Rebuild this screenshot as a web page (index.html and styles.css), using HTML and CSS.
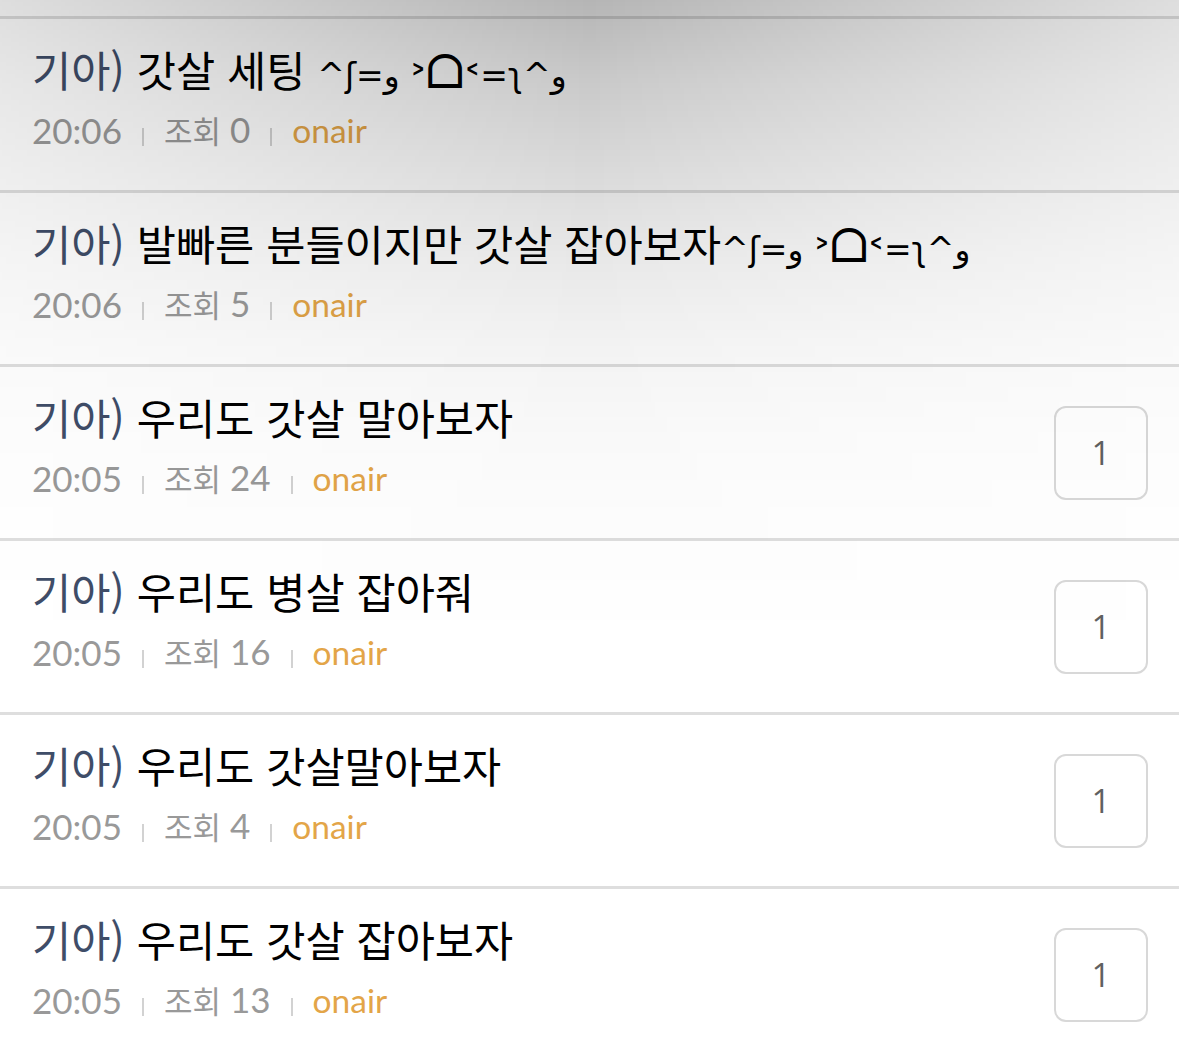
FILE: index.html
```html
<!DOCTYPE html>
<html lang="ko">
<head>
<meta charset="utf-8">
<title>게시판</title>
<link rel="stylesheet" href="styles.css">
</head>
<body>
<div class="shade"></div>
<ul class="list">
  <li class="row">
    <div class="body">
      <div class="title"><span class="tag">기아)</span> 갓살 세팅 <span class="emo">^ʃ=و <span class="arr">˃</span><span class="face">ᗝ</span><span class="arr">˂</span>=ʅ^و</span></div>
      <div class="meta"><span>20:06</span><i class="sep"></i><span><span class="lbl">조회</span> 0</span><i class="sep"></i><span class="nick">onair</span></div>
    </div>
  </li>
  <li class="row">
    <div class="body">
      <div class="title"><span class="tag">기아)</span> 발빠른 분들이지만 갓살 잡아보자<span class="emo">^ʃ=و <span class="arr">˃</span><span class="face">ᗝ</span><span class="arr">˂</span>=ʅ^و</span></div>
      <div class="meta"><span>20:06</span><i class="sep"></i><span><span class="lbl">조회</span> 5</span><i class="sep"></i><span class="nick">onair</span></div>
    </div>
  </li>
  <li class="row">
    <div class="body">
      <div class="title"><span class="tag">기아)</span> 우리도 갓살 말아보자</div>
      <div class="meta"><span>20:05</span><i class="sep"></i><span><span class="lbl">조회</span> 24</span><i class="sep"></i><span class="nick">onair</span></div>
    </div>
    <div class="count">1</div>
  </li>
  <li class="row">
    <div class="body">
      <div class="title"><span class="tag">기아)</span> 우리도 병살 잡아줘</div>
      <div class="meta"><span>20:05</span><i class="sep"></i><span><span class="lbl">조회</span> 16</span><i class="sep"></i><span class="nick">onair</span></div>
    </div>
    <div class="count">1</div>
  </li>
  <li class="row">
    <div class="body">
      <div class="title"><span class="tag">기아)</span> 우리도 갓살말아보자</div>
      <div class="meta"><span>20:05</span><i class="sep"></i><span><span class="lbl">조회</span> 4</span><i class="sep"></i><span class="nick">onair</span></div>
    </div>
    <div class="count">1</div>
  </li>
  <li class="row">
    <div class="body">
      <div class="title"><span class="tag">기아)</span> 우리도 갓살 잡아보자</div>
      <div class="meta"><span>20:05</span><i class="sep"></i><span><span class="lbl">조회</span> 13</span><i class="sep"></i><span class="nick">onair</span></div>
    </div>
    <div class="count">1</div>
  </li>
</ul>
</body>
</html>
```
FILE: styles.css
```css
html, body {
  margin: 0;
  padding: 0;
  background: #fff;
}
body {
  font-family: Lato, "Noto Sans CJK KR", "DejaVu Sans", sans-serif;
  color: #000;
  overflow: hidden;
}
.shade {
  position: fixed;
  inset: 0;
  pointer-events: none;
  z-index: 5;
  background: linear-gradient(to bottom,
    rgba(0,0,0,0.29) 0px,
    rgba(0,0,0,0.21) 80px,
    rgba(0,0,0,0.15) 170px,
    rgba(0,0,0,0.09) 260px,
    rgba(0,0,0,0.048) 350px,
    rgba(0,0,0,0.022) 440px,
    rgba(0,0,0,0.01) 520px,
    rgba(0,0,0,0) 640px);
  -webkit-mask-image: linear-gradient(to right, rgba(0,0,0,0.45), #000 50%, rgba(0,0,0,0.45));
  mask-image: linear-gradient(to right, rgba(0,0,0,0.45), #000 50%, rgba(0,0,0,0.45));
}
.list {
  list-style: none;
  margin: 0;
  padding: 16px 0 0;
}
.row {
  display: flex;
  align-items: center;
  border-top: 3px solid #dedede;
  height: 171px;
  padding: 0 31px 0 32px;
}
.body {
  flex: 1;
  min-width: 0;
  padding-bottom: 14px;
}
.title {
  font-family: "Noto Sans CJK KR", "DejaVu Sans", sans-serif;
  font-size: 42.6px;
  line-height: 52px;
  height: 52px;
  white-space: nowrap;
}
.tag {
  color: #3f4d68;
}
.emo {
  font-family: "DejaVu Sans", sans-serif;
  font-size: 33px;
  line-height: 0;
}
.arr {
  font-size: 40px;
  vertical-align: -10px;
  margin: 0 -2px;
}
.face {
  font-size: 46px;
  vertical-align: -1px;
}
.meta {
  margin-top: 12px;
  font-size: 35px;
  line-height: 44px;
  color: #999;
  display: flex;
  align-items: center;
}
.lbl {
  font-size: 31px;
}
.sep {
  display: inline-block;
  width: 2px;
  height: 18px;
  background: #d2d2d2;
  margin: 14px 20px 0;
}
.nick {
  color: #e3a548;
  font-size: 33.5px;
}
.count {
  width: 90px;
  height: 90px;
  border: 2px solid #d8d8d8;
  border-radius: 12px;
  background: #fff;
  display: flex;
  align-items: center;
  justify-content: center;
  font-family: "Open Sans", sans-serif;
  font-size: 33px;
  color: #606060;
  box-sizing: content-box;
}
```
